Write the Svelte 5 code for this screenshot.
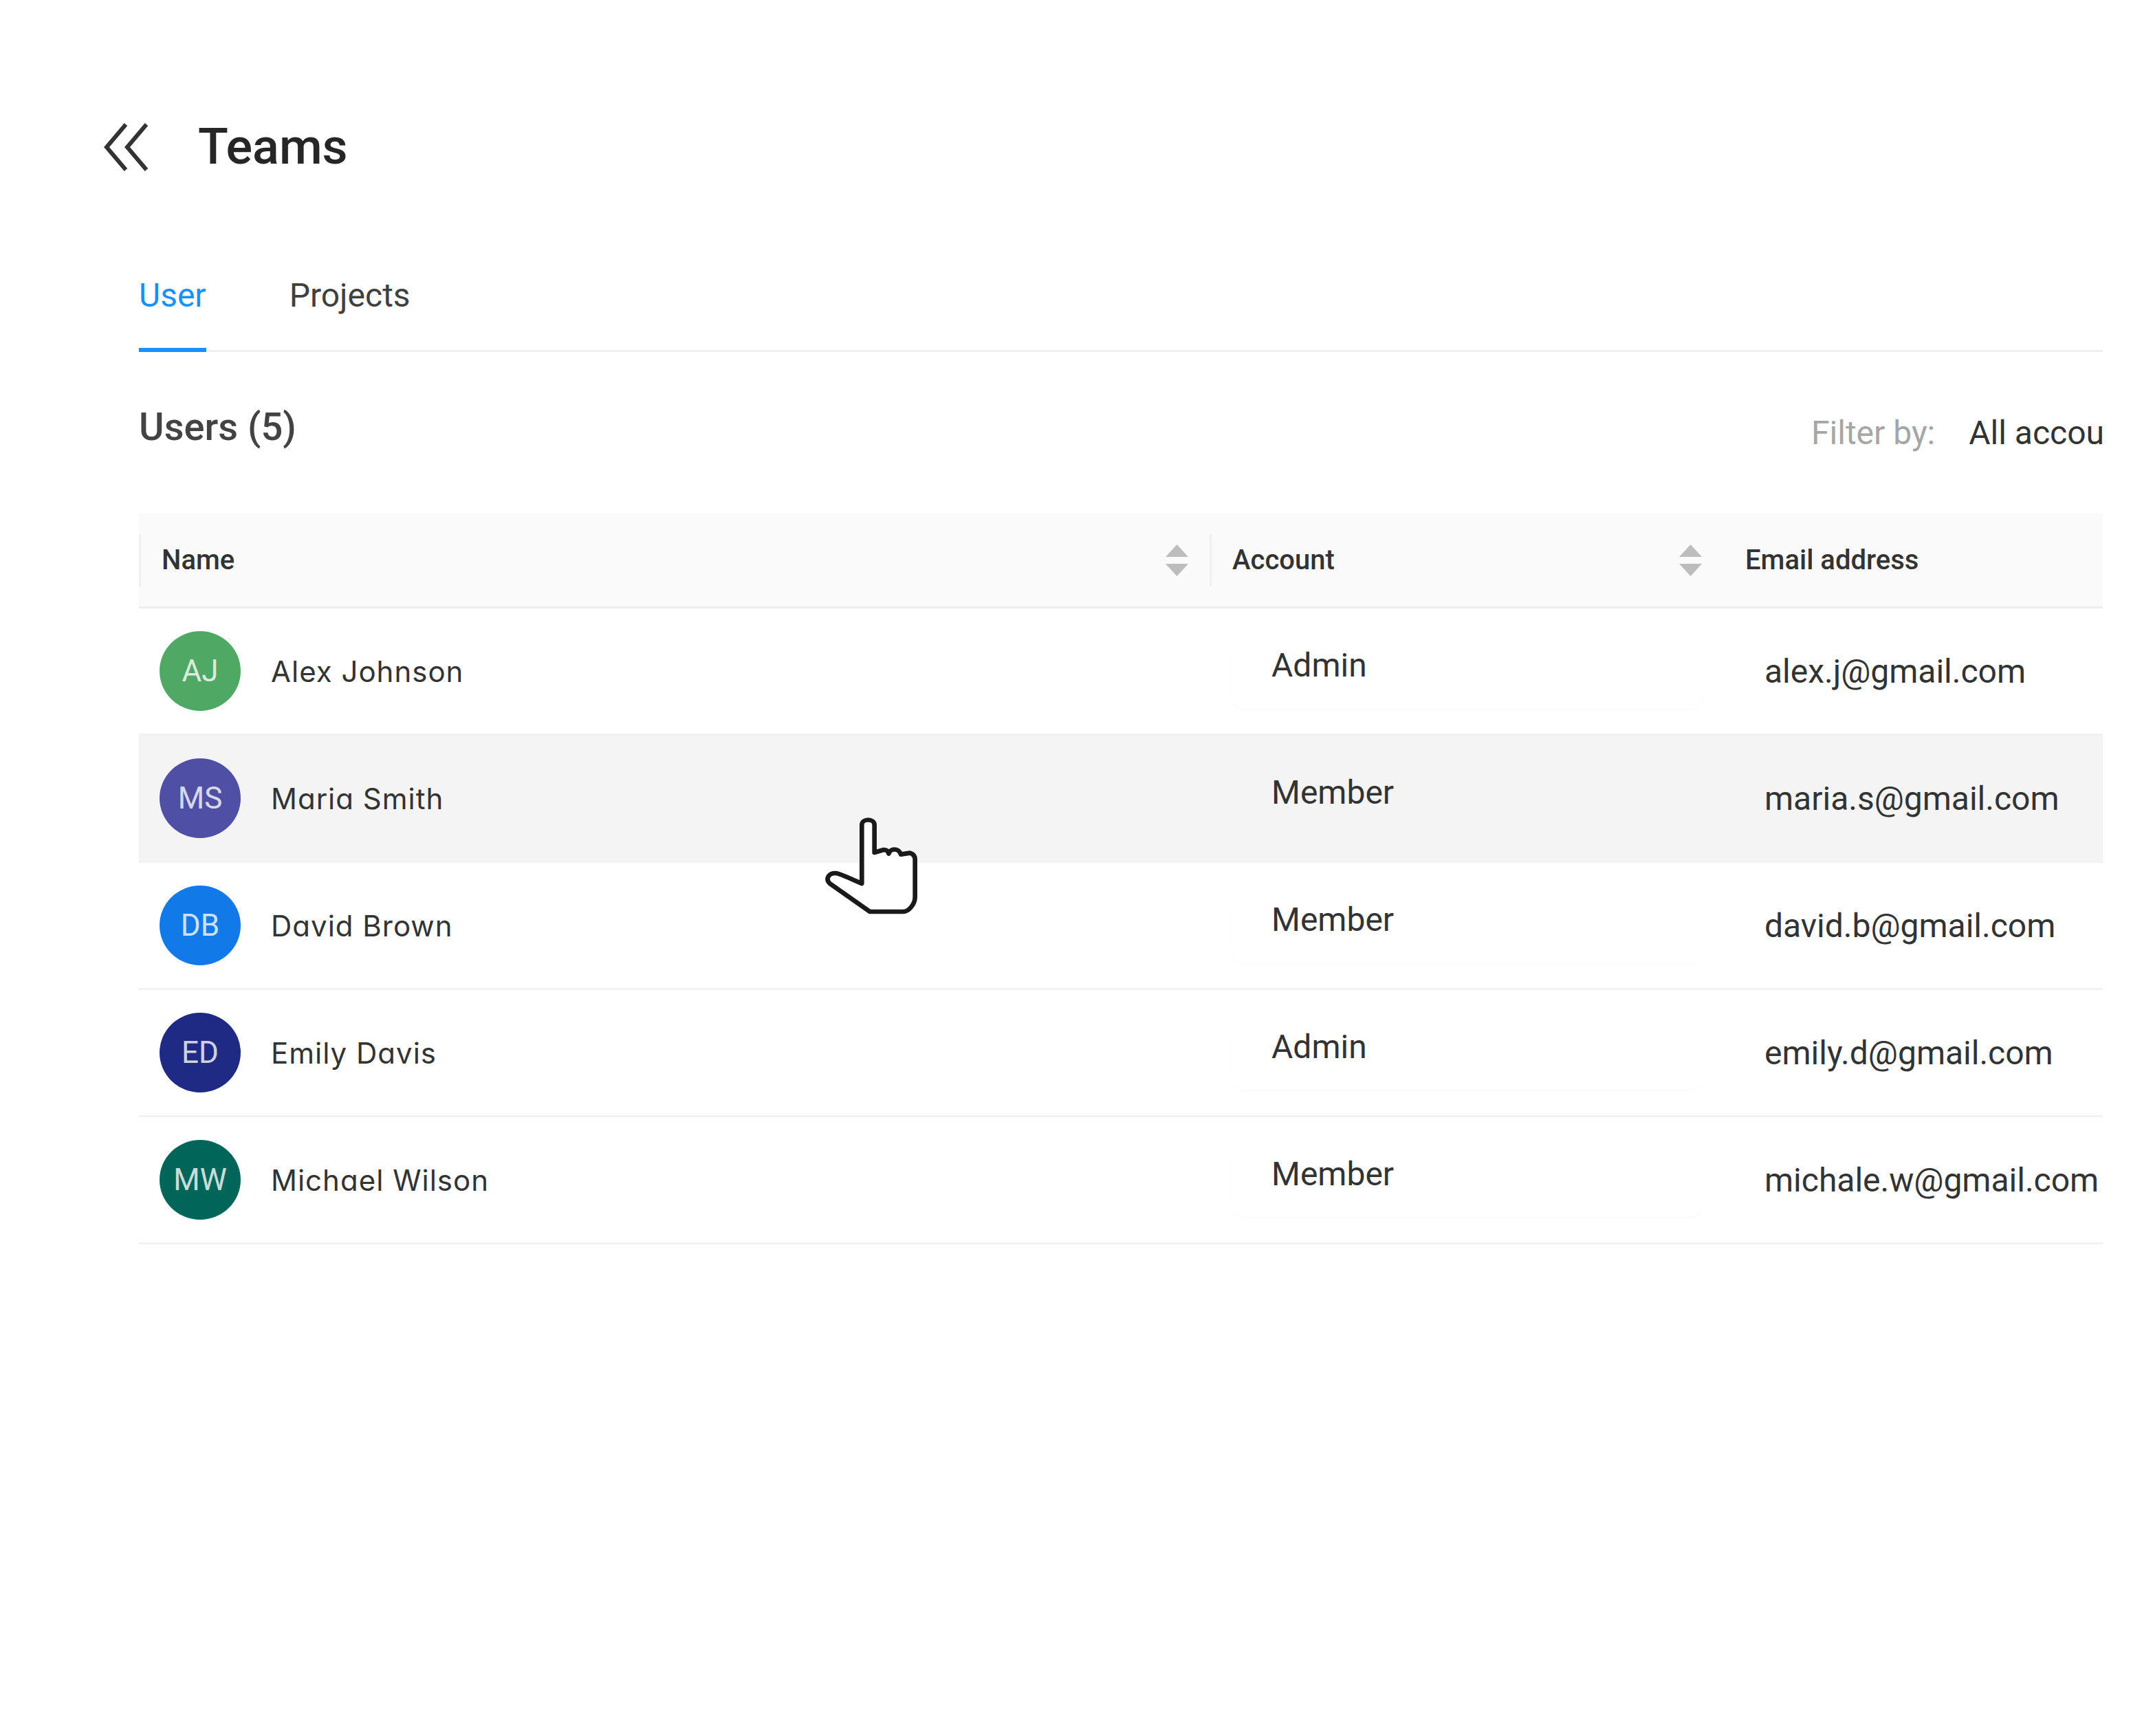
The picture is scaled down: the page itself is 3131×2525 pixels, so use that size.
<script>
    const users = [
        { initials: 'AJ', name: 'Alex Johnson', account: 'Admin', email: 'alex.j@gmail.com', color: '#4fa863' },
        { initials: 'MS', name: 'Maria Smith', account: 'Member', email: 'maria.s@gmail.com', color: '#4f50a5', hover: true },
        { initials: 'DB', name: 'David Brown', account: 'Member', email: 'david.b@gmail.com', color: '#127ae8' },
        { initials: 'ED', name: 'Emily Davis', account: 'Admin', email: 'emily.d@gmail.com', color: '#1f2a84' },
        { initials: 'MW', name: 'Michael Wilson', account: 'Member', email: 'michale.w@gmail.com', color: '#00665a' }
    ]
</script>

<div class="page">
    <header class="title_row">
        <svg class="back" width="68" height="72" viewBox="0 0 68 72" fill="none" stroke="#333" stroke-width="6">
            <path d="M33 3 L5 36 L33 69" />
            <path d="M63 3 L35 36 L63 69" />
        </svg>
        <h1>Teams</h1>
    </header>

    <div class="content">
        <nav class="tabs">
            <span class="tab active">User</span>
            <span class="tab">Projects</span>
        </nav>

        <div class="toolbar">
            <h2>Users (5)</h2>
            <div class="filter">
                <span class="filter_label">Filter by:</span>
                <span class="filter_value">All accounts</span>
            </div>
        </div>

        <div class="table">
            <div class="row head">
                <div class="th first">
                    <span>Name</span>
                    <svg class="sort" width="33" height="46" viewBox="0 0 33 46"><path d="M16.500 0 L33 18 H0 Z M0 28 H33 L16.500 46 Z" fill="#bdbdbd" /></svg>
                </div>
                <div class="th">
                    <span>Account</span>
                    <svg class="sort" width="33" height="46" viewBox="0 0 33 46"><path d="M16.500 0 L33 18 H0 Z M0 28 H33 L16.500 46 Z" fill="#bdbdbd" /></svg>
                </div>
                <div class="th email_head"><span>Email address</span></div>
            </div>

            {#each users as user (user.email)}
                <div class="row body" class:hover={user.hover}>
                    <div class="td user">
                        <span class="avatar" style="background: {user.color}">{user.initials}</span>
                        <span class="name">{user.name}</span>
                    </div>
                    <div class="td">
                        <div class="account" class:flat={user.hover}>{user.account}</div>
                    </div>
                    <div class="td email">{user.email}</div>
                </div>
            {/each}
        </div>
    </div>

    <svg class="cursor" width="250" height="220" viewBox="0 0 750 660">
        <path d="M310 405 V150 C310 120 365 120 365 150 V270 L405 258 C418 258 425 265 427 275 C435 250 470 250 480 278 L520 272 C535 276 542 285 542 300 V465 C542 495 515 528 490 528 H345 L170 405 C150 385 165 360 195 360 C215 360 280 395 310 405 Z" fill="#fff" stroke="#1a1a1a" stroke-width="20" stroke-linejoin="round" />
    </svg>
</div>

<style>
    :global(body) {
        margin: 0;
        background: #fff;
    }
    .page {
        position: relative;
        box-sizing: border-box;
        width: 3131px;
        height: 2525px;
        padding: 178px 73px 0 150px;
        font-family: Roboto, "Liberation Sans", sans-serif;
        color: #333;
        overflow: hidden;
    }
    .title_row {
        display: flex;
        align-items: center;
        gap: 70px;
        height: 72px;
    }
    h1 {
        margin: 0;
        font-size: 72px;
        line-height: 72px;
        font-weight: 500;
        color: #262626;
    }
    .content {
        margin-left: 52px;
        overflow: hidden;
    }
    .tabs {
        display: flex;
        gap: 121px;
        margin-top: 152px;
        border-bottom: 3px solid #f0f0f0;
    }
    .tab {
        font-size: 48px;
        line-height: 56px;
        padding-bottom: 48px;
        margin-bottom: -3px;
        border-bottom: 6px solid transparent;
        color: #404040;
    }
    .tab.active {
        color: #1890ff;
        border-bottom-color: #1890ff;
    }
    .toolbar {
        display: flex;
        justify-content: space-between;
        align-items: flex-start;
        height: 158px;
        margin-top: 77px;
    }
    h2 {
        margin: 0;
        font-size: 56px;
        line-height: 64px;
        font-weight: 500;
        color: #434343;
    }
    .filter {
        display: flex;
        gap: 49px;
        flex: none;
        width: 424px;
        margin-top: 13px;
        font-size: 48px;
        line-height: 56px;
        white-space: nowrap;
        overflow: hidden;
    }
    .filter_label {
        color: #a6a6a6;
    }
    .filter_value {
        color: #333;
    }
    .row {
        display: grid;
        grid-template-columns: 1557px 747px 1fr;
    }
    .head {
        height: 135px;
        background: #fafafa;
        border-bottom: 3px solid #eee;
        align-items: center;
    }
    .th {
        display: flex;
        justify-content: space-between;
        align-items: center;
        height: 76px;
        padding: 0 31px 0 30px;
        border-left: 3px solid #f0f0f0;
        font-size: 40px;
        font-weight: 500;
        color: #333;
        box-sizing: border-box;
    }
    .th.email_head {
        border-left: 0;
        padding-left: 32px;
    }
    .sort {
        flex: none;
    }
    .body {
        height: 185px;
        box-sizing: border-box;
        border-bottom: 3px solid #f2f2f2;
        align-items: center;
    }
    .body.hover {
        background: #f4f4f4;
    }
    .td {
        box-sizing: border-box;
        white-space: nowrap;
    }
    .user {
        display: flex;
        align-items: center;
        gap: 44px;
        padding-left: 30px;
    }
    .avatar {
        display: flex;
        align-items: center;
        justify-content: center;
        flex: none;
        width: 118px;
        height: 116px;
        border-radius: 50%;
        font-size: 44px;
        color: rgba(255, 255, 255, .8);
    }
    .name {
        font-family: Inter, "Noto Sans", sans-serif;
        font-feature-settings: "cv11";
        font-size: 42px;
        letter-spacing: 1px;
        color: #333;
    }
    .account {
        box-sizing: border-box;
        width: 685px;
        height: 108px;
        margin-left: 32px;
        padding-left: 58px;
        border-radius: 20px;
        font-size: 48px;
        line-height: 92px;
        color: #333;
        box-shadow: 0 3px 4px rgba(0, 0, 0, .015);
    }
    .account.flat {
        box-shadow: none;
    }
    .email {
        padding-left: 60px;
        font-size: 48px;
        color: #333;
    }
    .cursor {
        position: absolute;
        left: 1150px;
        top: 1150px;
    }
</style>
